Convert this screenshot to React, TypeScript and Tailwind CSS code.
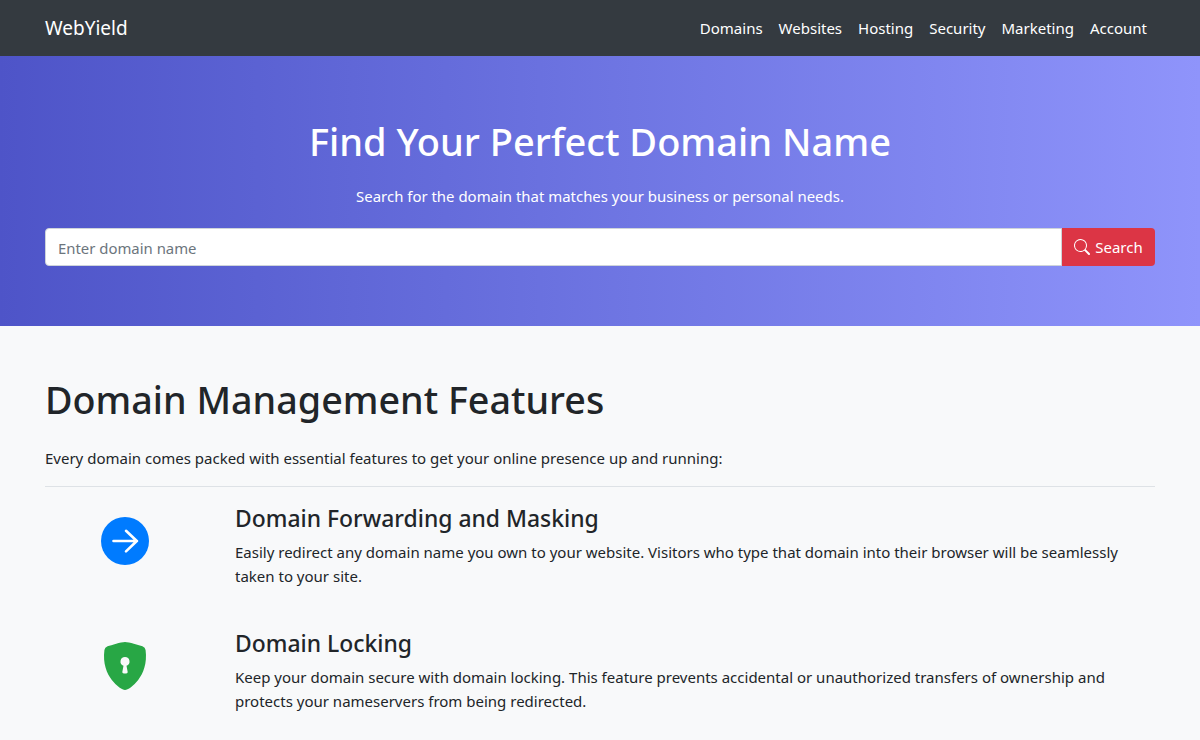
import { BsSearch, BsShieldLockFill } from "react-icons/bs";

const nav = ["Domains", "Websites", "Hosting", "Security", "Marketing", "Account"];

export default function App() {
  return (
    <div className="h-[740px] overflow-hidden bg-[#f8f9fa] text-[#212529] font-['Noto_Sans','Open_Sans',sans-serif]">
      <nav className="h-14 bg-[#343a40] px-[45px] flex items-center justify-between">
        <span className="text-[19px] text-white">WebYield</span>
        <div className="flex text-[15px] text-white">
          {nav.map((n) => (
            <a key={n} className="px-2">{n}</a>
          ))}
        </div>
      </nav>
      <header className="h-[270px] bg-gradient-to-r from-[#4e54c8] to-[#8f94fb] px-[45px] pt-[61px] text-white text-center">
        <h1 className="text-[38px] leading-[48px] font-medium mb-[19px]">Find Your Perfect Domain Name</h1>
        <p className="text-[14.95px] leading-6 mb-5">Search for the domain that matches your business or personal needs.</p>
        <div className="flex h-[38px]">
          <input
            placeholder="Enter domain name"
            className="flex-1 bg-white rounded-l border border-[#ced4da] px-[12px] pt-[2px] text-[14.9px] text-[#495057] placeholder:text-[#6c757d] outline-none"
          />
          <button className="w-[93px] bg-[#dc3545] rounded-r flex items-center justify-center gap-[5px] text-[15px] text-white">
            <BsSearch className="w-4 h-4" />
            Search
          </button>
        </div>
      </header>
      <main className="px-[45px] pt-[50px]">
        <h2 className="text-[37.7px] leading-[48px] font-medium mb-[22px]">Domain Management Features</h2>
        <p className="text-[15px] leading-6 mb-4">Every domain comes packed with essential features to get your online presence up and running:</p>
        <hr className="border-[#dee2e6] mb-[17px]" />
        <section className="flex mb-[41px]">
          <div className="w-40 shrink-0 flex justify-center pt-[13px]">
            <svg viewBox="0 0 48 48" className="w-12 h-12" aria-hidden="true">
              <circle cx="24" cy="24" r="24" fill="#007bff" />
              <path d="M12.5 24H36M25 13.8 35.8 24 25 34.4" fill="none" stroke="#fff" strokeWidth="2.6" strokeLinecap="round" strokeLinejoin="round" />
            </svg>
          </div>
          <div className="pl-[30px]">
            <h3 className="text-[22.9px] leading-[29px] font-medium mb-[7px]">Domain Forwarding and Masking</h3>
            <p className="text-[15px] leading-6">Easily redirect any domain name you own to your website. Visitors who type that domain into their browser will be seamlessly taken to your site.</p>
          </div>
        </section>
        <section className="flex">
          <div className="w-40 shrink-0 flex justify-center pt-[13px]">
            <BsShieldLockFill className="w-12 h-12 text-[#28a745]" />
          </div>
          <div className="pl-[30px]">
            <h3 className="text-[22.9px] leading-[29px] font-medium mb-[7px]">Domain Locking</h3>
            <p className="text-[15px] leading-6">Keep your domain secure with domain locking. This feature prevents accidental or unauthorized transfers of ownership and protects your nameservers from being redirected.</p>
          </div>
        </section>
      </main>
    </div>
  );
}
